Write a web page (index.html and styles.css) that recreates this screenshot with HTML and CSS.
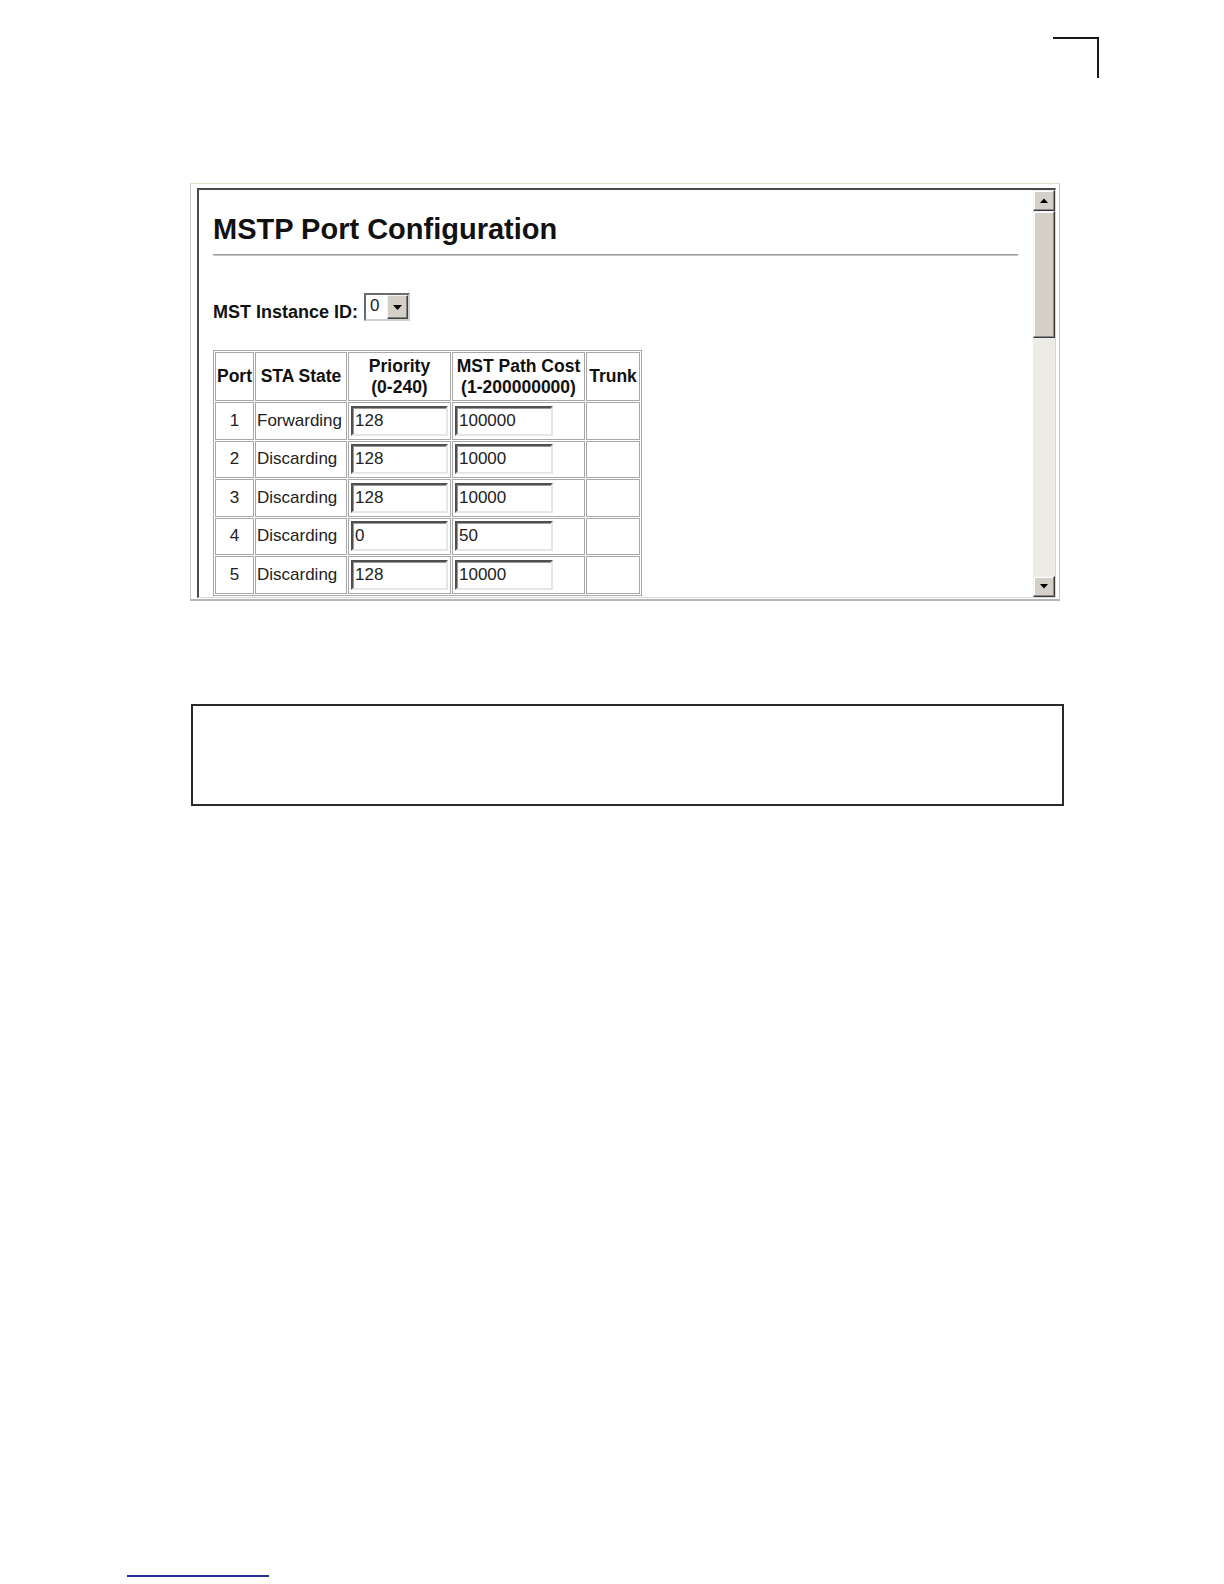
FILE: index.html
```html
<!DOCTYPE html>
<html lang="en">
<head>
<meta charset="utf-8">
<title>MSTP Port Configuration</title>
<link rel="stylesheet" href="styles.css">
</head>
<body>
<div class="page">
  <div class="crop-row"><div class="crop-mark"></div></div>

  <div class="shot">
    <div class="viewport">
      <div class="content">
        <h1 class="title">MSTP Port Configuration</h1>
        <div class="rule"></div>
        <div class="instance">
          <span class="label">MST Instance ID:</span>
          <span class="select">
            <span class="sel-val">0</span>
            <span class="sel-btn"><svg width="9" height="5" viewBox="0 0 9 5"><path d="M0 0H9L4.5 5Z" fill="#000"/></svg></span>
          </span>
        </div>
        <table class="ports">
          <thead>
            <tr>
              <th class="c-port">Port</th>
              <th class="c-state">STA State</th>
              <th class="c-prio">Priority<br>(0-240)</th>
              <th class="c-cost">MST Path Cost<br>(1-200000000)</th>
              <th class="c-trunk">Trunk</th>
            </tr>
          </thead>
          <tbody>
            <tr><td class="num">1</td><td class="state">Forwarding</td><td class="fld"><span class="input in-prio">128</span></td><td class="fld"><span class="input in-cost">100000</span></td><td></td></tr>
            <tr><td class="num">2</td><td class="state">Discarding</td><td class="fld"><span class="input in-prio">128</span></td><td class="fld"><span class="input in-cost">10000</span></td><td></td></tr>
            <tr><td class="num">3</td><td class="state">Discarding</td><td class="fld"><span class="input in-prio">128</span></td><td class="fld"><span class="input in-cost">10000</span></td><td></td></tr>
            <tr><td class="num">4</td><td class="state">Discarding</td><td class="fld"><span class="input in-prio">0</span></td><td class="fld"><span class="input in-cost">50</span></td><td></td></tr>
            <tr><td class="num">5</td><td class="state">Discarding</td><td class="fld"><span class="input in-prio">128</span></td><td class="fld"><span class="input in-cost">10000</span></td><td></td></tr>
          </tbody>
        </table>
      </div>
      <div class="scrollbar">
        <div class="sb-btn"><svg width="8" height="5" viewBox="0 0 8 5"><path d="M4 0.5L8 5H0Z" fill="#000"/></svg></div>
        <div class="sb-thumb"></div>
        <div class="sb-track"></div>
        <div class="sb-btn"><svg width="8" height="5" viewBox="0 0 8 5"><path d="M0 0H8L4 4.5Z" fill="#000"/></svg></div>
      </div>
    </div>
  </div>

  <div class="note"></div>

  <div class="footer-line"></div>
</div>
</body>
</html>
```

FILE: styles.css
```css
* { box-sizing: border-box; }
html, body { margin: 0; padding: 0; background: #fff; }
body {
  width: 1224px;
  height: 1584px;
  overflow: hidden;
  font-family: "Liberation Sans", Arial, sans-serif;
  color: #111;
}
.page { padding-top: 37px; }

.crop-row { display: flex; justify-content: flex-end; padding-right: 125px; }
.crop-mark {
  width: 46px;
  height: 41px;
  border-top: 2px solid #1a1a1a;
  border-right: 2px solid #1a1a1a;
}

.shot {
  margin: 105px 0 0 190px;
  width: 870px;
  border: 1px solid #c8c8c2;
  border-top-color: #dfe3c4;
  border-bottom: 2px solid #b6b6b6;
  padding: 4px 3px 1px 6px;
}
.viewport {
  display: flex;
  height: 410px;
  border-top: 2px solid #4a4a4a;
  border-left: 2px solid #4a4a4a;
  border-right: 1px solid #d6d6d6;
  border-bottom: 1px solid #d6d6d6;
  overflow: hidden;
  background: #fff;
}
.content {
  flex: 1;
  padding: 23px 15px 0 14px;
  overflow: hidden;
}
.title {
  margin: 0;
  font-size: 29px;
  line-height: 32px;
  font-weight: bold;
  color: #111;
}
.rule {
  margin-top: 9px;
  height: 2px;
  border-top: 1px solid #9c9c9c;
  border-bottom: 1px solid #c4c4c4;
}
.instance {
  margin-top: 37px;
  height: 28px;
  display: flex;
  align-items: flex-start;
}
.label {
  margin-top: 9px;
  font-size: 18px;
  line-height: 20px;
  font-weight: bold;
}
.select {
  display: inline-flex;
  width: 46px;
  height: 28px;
  margin-left: 6px;
  border: 2px solid;
  border-color: #6a6a6a #d0d0d0 #d0d0d0 #6a6a6a;
  background: #fff;
}
.sel-val {
  flex: 1;
  font-size: 17px;
  line-height: 22px;
  padding-left: 4px;
  color: #222;
}
.sel-btn {
  width: 21px;
  background: #d4d0c8;
  border: 1px solid;
  border-color: #f4f4f4 #404040 #404040 #f4f4f4;
  box-shadow: inset -1px -1px #808080;
  display: flex;
  align-items: center;
  justify-content: center;
}

.ports {
  margin-top: 29px;
  border: 1px solid #a8a8a8;
  border-spacing: 1px;
  table-layout: fixed;
  font-size: 17px;
  color: #222;
}
.ports th, .ports td {
  border: 1px solid #a8a8a8;
  padding: 0 1px;
}
.ports th {
  height: 49px;
  font-size: 17.5px;
  font-weight: bold;
  line-height: 21px;
  text-align: center;
  vertical-align: middle;
  color: #111;
}
.ports td { height: 37.5px; vertical-align: middle; }
.c-port { width: 39px; }
.c-state { width: 92px; }
.c-prio { width: 103px; }
.c-cost { width: 133px; }
.c-trunk { width: 54px; }
.num { text-align: center; }
.state { text-align: left; }
.ports td.fld { text-align: left; padding-left: 2px; }
.input {
  display: block;
  height: 30px;
  border: 2px solid;
  border-color: #505050 #e6e6e6 #e6e6e6 #505050;
  box-shadow: inset 1px 1px #9a9a9a;
  background: #fff;
  padding-left: 2px;
  line-height: 26px;
  font-size: 17px;
  color: #222;
}
.in-prio { width: 97px; }
.in-cost { width: 98px; }

.scrollbar {
  width: 22px;
  display: flex;
  flex-direction: column;
  background: #ecebe5;
}
.sb-btn, .sb-thumb {
  background: #d4d0c8;
  border: 1px solid;
  border-color: #eeeeee #3c3c3c #3c3c3c #eeeeee;
  box-shadow: inset -1px -1px #8a8a8a, inset 1px 1px #ffffff;
}
.sb-btn {
  height: 21px;
  display: flex;
  align-items: center;
  justify-content: center;
}
.sb-thumb { height: 127px; }
.sb-track { flex: 1; }

.note {
  margin: 103px 0 0 191px;
  width: 873px;
  height: 102px;
  border: 2px solid #2a2a2a;
}

.footer-line {
  margin: 769px 0 0 127px;
  width: 142px;
  height: 2px;
  background: #2b2b96;
}
```
